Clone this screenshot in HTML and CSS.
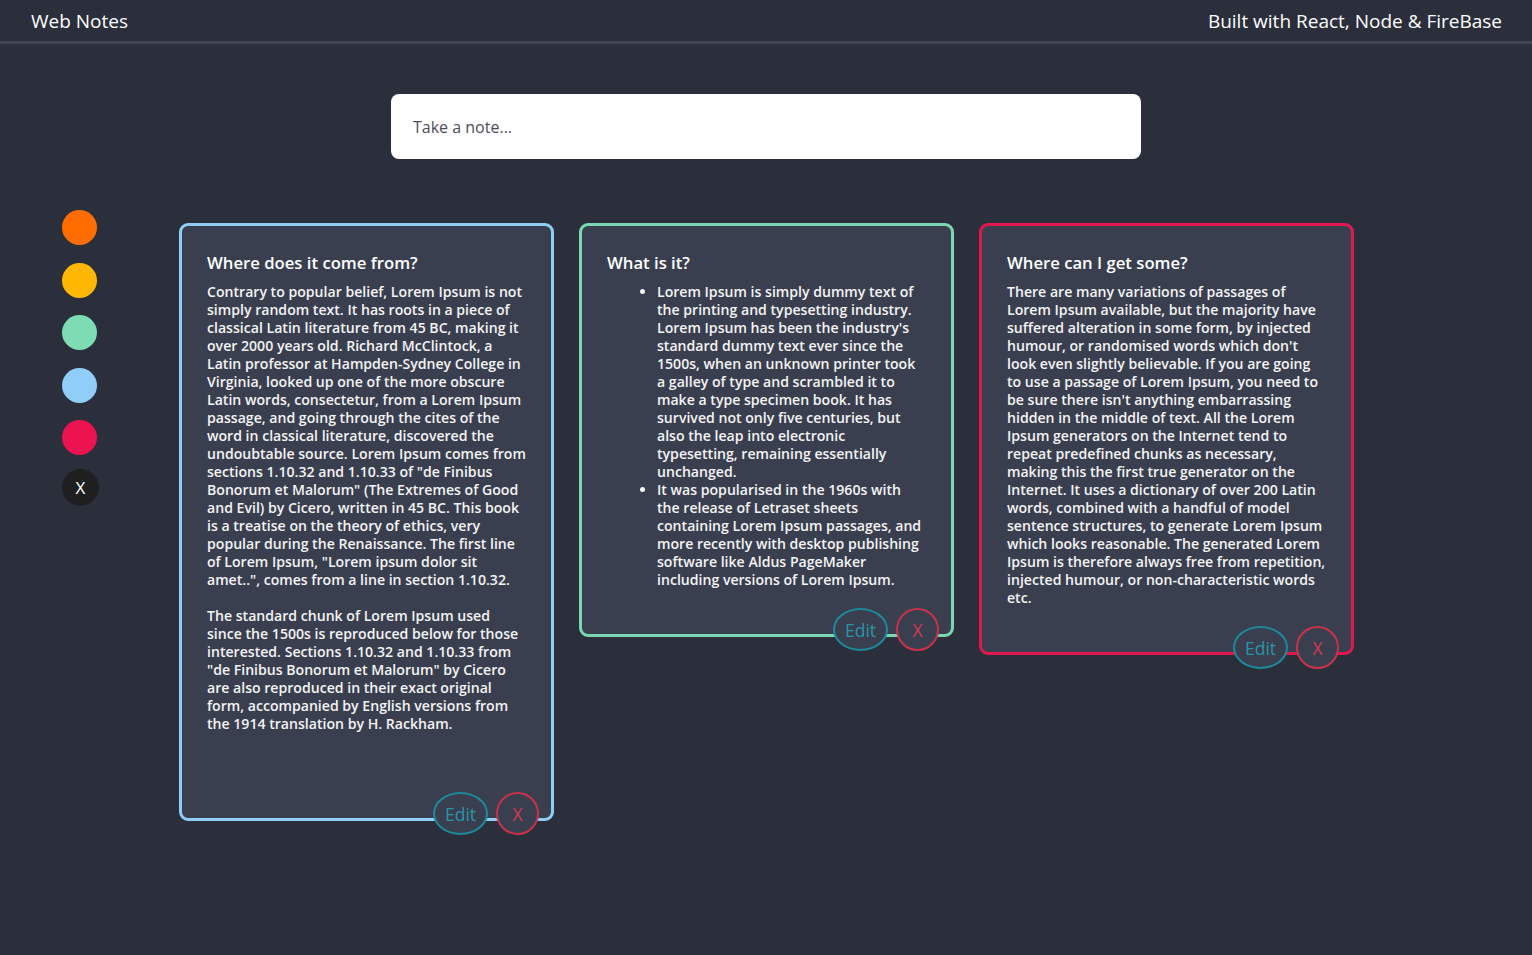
FILE: index.html
```html
<!DOCTYPE html>
<html lang="en">
<head>
<meta charset="utf-8">
<title>Web Notes</title>
<link rel="stylesheet" href="styles.css">
</head>
<body>
<header class="topbar">
  <div class="brand">Web Notes</div>
  <div class="built">Built with React, Node &amp; FireBase</div>
</header>

<main class="main">
  <div class="composer">
    <input class="composer-input" type="text" placeholder="Take a note...">
  </div>

  <section class="board">
    <aside class="palette">
      <span class="swatch swatch-orange"></span>
      <span class="swatch swatch-yellow"></span>
      <span class="swatch swatch-green"></span>
      <span class="swatch swatch-blue"></span>
      <span class="swatch swatch-red"></span>
      <span class="swatch swatch-clear">X</span>
    </aside>

    <div class="notes">
      <article class="note note-blue">
        <h2 class="note-title">Where does it come from?</h2>
        <div class="note-body">
          <p class="para">Contrary to popular belief, Lorem Ipsum is not simply random text. It has roots in a piece of classical Latin literature from 45 BC, making it over 2000 years old. Richard McClintock, a Latin professor at Hampden-Sydney College in Virginia, looked up one of the more obscure Latin words, consectetur, from a Lorem Ipsum passage, and going through the cites of the word in classical literature, discovered the undoubtable source. Lorem Ipsum comes from sections 1.10.32 and 1.10.33 of "de Finibus Bonorum et Malorum" (The Extremes of Good and Evil) by Cicero, written in 45 BC. This book is a treatise on the theory of ethics, very popular during the Renaissance. The first line of Lorem Ipsum, "Lorem ipsum dolor sit amet..", comes from a line in section 1.10.32.</p>
          <p class="para">The standard chunk of Lorem Ipsum used since the 1500s is reproduced below for those interested. Sections 1.10.32 and 1.10.33 from "de Finibus Bonorum et Malorum" by Cicero are also reproduced in their exact original form, accompanied by English versions from the 1914 translation by H. Rackham.</p>
          <p class="para para-empty"></p>
        </div>
        <div class="note-actions">
          <button class="btn btn-edit">Edit</button>
          <button class="btn btn-delete">X</button>
        </div>
      </article>

      <article class="note note-green">
        <h2 class="note-title">What is it?</h2>
        <div class="note-body">
          <ul class="note-list">
            <li>Lorem Ipsum is simply dummy text of the printing and typesetting industry. Lorem Ipsum has been the industry's standard dummy text ever since the 1500s, when an unknown printer took a galley of type and scrambled it to make a type specimen book. It has survived not only five centuries, but also the leap into electronic typesetting, remaining essentially unchanged.</li>
            <li>It was popularised in the 1960s with the release of Letraset sheets containing Lorem Ipsum passages, and more recently with desktop publishing software like Aldus PageMaker including versions of Lorem Ipsum.</li>
          </ul>
        </div>
        <div class="note-actions">
          <button class="btn btn-edit">Edit</button>
          <button class="btn btn-delete">X</button>
        </div>
      </article>

      <article class="note note-red">
        <h2 class="note-title">Where can I get some?</h2>
        <div class="note-body">
          <p class="para">There are many variations of passages of Lorem Ipsum available, but the majority have suffered alteration in some form, by injected humour, or randomised words which don't look even slightly believable. If you are going to use a passage of Lorem Ipsum, you need to be sure there isn't anything embarrassing hidden in the middle of text. All the Lorem Ipsum generators on the Internet tend to repeat predefined chunks as necessary, making this the first true generator on the Internet. It uses a dictionary of over 200 Latin words, combined with a handful of model sentence structures, to generate Lorem Ipsum which looks reasonable. The generated Lorem Ipsum is therefore always free from repetition, injected humour, or non-characteristic words etc.</p>
        </div>
        <div class="note-actions">
          <button class="btn btn-edit">Edit</button>
          <button class="btn btn-delete">X</button>
        </div>
      </article>
    </div>
  </section>
</main>
</body>
</html>
```

FILE: styles.css
```css
* { box-sizing: border-box; }

html, body {
  margin: 0;
  padding: 0;
}

body {
  background: #2b2e3b;
  color: #fff;
  font-family: "Open Sans", "Noto Sans", sans-serif;
  min-height: 955px;
}

.topbar {
  display: flex;
  justify-content: space-between;
  align-items: center;
  height: 44px;
  padding: 0 30px 0 31px;
  border-bottom: 3px solid #414454;
  font-size: 19px;
  color: #fff;
}

.main {
  padding-top: 50px;
}

.composer {
  width: 750px;
  margin: 0 auto;
}

.composer-input {
  display: block;
  width: 100%;
  height: 65px;
  border: none;
  border-radius: 8px;
  background: #fff;
  padding: 0 22px;
  font-family: "Open Sans", sans-serif;
  font-size: 16px;
  color: #333;
  outline: none;
}

.composer-input::placeholder {
  color: #4e4b57;
}

.board {
  display: flex;
  align-items: flex-start;
  margin-top: 51px;
  padding-left: 62px;
}

.palette {
  display: flex;
  flex-direction: column;
  align-items: flex-start;
  width: 37px;
  gap: 17.5px;
}

.swatch {
  display: block;
  width: 35px;
  height: 35px;
  border-radius: 50%;
}

.swatch-orange { background: #ff6d00; }
.swatch-yellow { background: #ffb703; }
.swatch-green { background: #7edcb4; }
.swatch-blue { background: #90cdf9; }
.swatch-red { background: #ed1250; }

.swatch-clear {
  width: 37px;
  height: 37px;
  margin-top: -4px;
  background: #1f1f22;
  color: #fff;
  display: flex;
  align-items: center;
  justify-content: center;
  font-size: 17px;
}

.notes {
  display: flex;
  align-items: flex-start;
  gap: 25px;
  margin-left: 80px;
  margin-top: 13px;
}

.note {
  width: 375px;
  background: #3a3f50;
  border: 3px solid #90cdf4;
  border-radius: 9px;
  padding: 25px 12px 0 25px;
}

.note-blue { border-color: #90cdf4; }
.note-green { border-color: #7ad7b2; }
.note-red { border-color: #e0184d; }

.note-title {
  margin: 0 0 8px;
  font-size: 16.7px;
  line-height: 24px;
  font-weight: 600;
  color: #fff;
}

.note-body {
  padding-right: 13px;
  font-size: 14.1px;
  line-height: 18px;
  font-weight: 600;
  color: #f4f4f4;
}

.para {
  margin: 0 0 18px;
}

.para:last-child {
  margin-bottom: 0;
}

.para-empty {
  height: 22px;
}

.note-list {
  margin: 0;
  padding-left: 50px;
}

.note-actions {
  display: flex;
  justify-content: flex-end;
  gap: 8px;
  margin-top: 19px;
  margin-bottom: -17px;
  position: relative;
}

.btn {
  height: 43px;
  border-radius: 50%;
  background: #3a3f50;
  font-family: "Open Sans", sans-serif;
  font-size: 17.5px;
  padding: 0;
  cursor: pointer;
}

.btn-edit {
  width: 55px;
  border: 2px solid #1d8a9c;
  color: #2a95a6;
}

.btn-delete {
  width: 43px;
  border: 2px solid #c8324a;
  color: #d63a52;
}
```
